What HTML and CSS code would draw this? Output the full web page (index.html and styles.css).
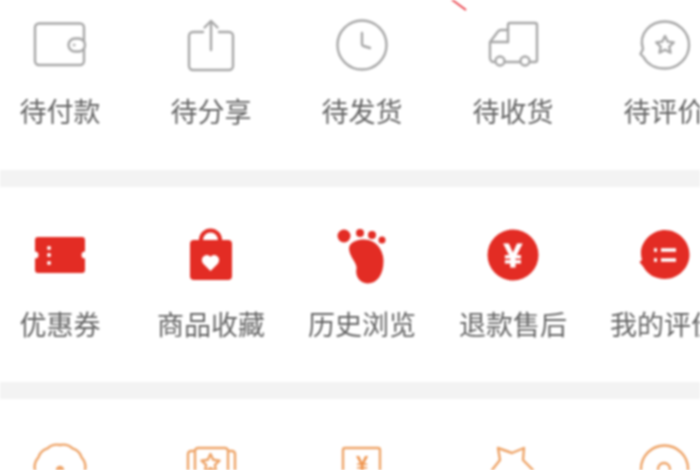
FILE: index.html
```html
<!DOCTYPE html>
<html lang="zh-CN">
<head>
<meta charset="utf-8">
<title>我的订单</title>
<link rel="stylesheet" href="styles.css">
</head>
<body>
<main class="page">
  <svg class="streak" viewBox="0 0 20 12" width="20" height="12" aria-hidden="true"><path d="M1 -1 L16 10"/></svg>

  <section class="row row-orders">
    <div class="cell">
      <svg class="icon line" viewBox="0 0 60 60"><path d="M9 8.500 H50 a4 4 0 0 1 4 4 V46 a4 4 0 0 1 -4 4 H9 a4 4 0 0 1 -4 -4 V12.500 a4 4 0 0 1 4 -4Z"/><rect class="fill-white" x="38.500" y="23.500" width="16.500" height="13" rx="6.500"/><circle class="thin" cx="44" cy="30" r="1"/></svg>
      <span class="label">待付款</span>
    </div>
    <div class="cell">
      <svg class="icon line" viewBox="0 0 60 60"><path d="M22 17 H12 a4 4 0 0 0 -4 4 V51 a4 4 0 0 0 4 4 H48 a4 4 0 0 0 4 -4 V21 a4 4 0 0 0 -4 -4 H38"/><path d="M30 6 V35 M23.500 12.500 L30 6 L36.500 12.500"/></svg>
      <span class="label">待分享</span>
    </div>
    <div class="cell">
      <svg class="icon line" viewBox="0 0 60 60"><circle cx="30" cy="30" r="24.500"/><path d="M30 18 V29 a2 2 0 0 0 1.500 2 L38 33"/></svg>
      <span class="label">待发货</span>
    </div>
    <div class="cell">
      <svg class="icon line" viewBox="0 0 60 60"><path d="M25 27 V10 a2 2 0 0 1 2 -2 H52 a2 2 0 0 1 2 2 V45 a2 2 0 0 1 -2 2 H47"/><path d="M25 15 H18 a4 4 0 0 0 -3 1.500 L7 27 V43 a4 4 0 0 0 4 4 M7 27 H25 M22 47 H37"/><circle cx="17" cy="46" r="4.500"/><circle cx="42" cy="46" r="4.500"/></svg>
      <span class="label">待收货</span>
    </div>
    <div class="cell">
      <svg class="icon line" viewBox="0 0 60 60"><path d="M9 34 C4 18 17 6.500 31 6.500 C44 6.500 55 17 55 30 C55 43 44 53.500 31 53.500 C21 53.500 13 49 9.500 42 L6.500 39 Z"/><path d="M31 21 L33.700 26.600 L39.800 27.400 L35.300 31.600 L36.500 37.700 L31 34.700 L25.500 37.700 L26.700 31.600 L22.200 27.400 L28.300 26.600Z"/></svg>
      <span class="label">待评价</span>
    </div>
  </section>

  <div class="band"></div>

  <section class="row row-services">
    <div class="cell">
      <svg class="icon solid" viewBox="0 0 60 60"><path d="M8 9 H52 a3 3 0 0 1 3 3 V23.500 a3.500 3.500 0 0 0 0 7 V42 a3 3 0 0 1 -3 3 H8 a3 3 0 0 1 -3 -3 V30.500 a3.500 3.500 0 0 0 0 -7 V12 a3 3 0 0 1 3 -3Z"/><circle class="dot" cx="19" cy="20" r="2"/><circle class="dot" cx="19" cy="27" r="2"/><circle class="dot" cx="19" cy="35" r="2"/></svg>
      <span class="label">优惠券</span>
    </div>
    <div class="cell">
      <svg class="icon solid" viewBox="0 0 60 60"><path class="handle" d="M20 14 V12 a9.500 9.500 0 0 1 19 0 V14"/><path d="M13 12 H47 a4 4 0 0 1 4 4 V48 a4 4 0 0 1 -4 4 H13 a4 4 0 0 1 -4 -4 V16 a4 4 0 0 1 4 -4Z"/><path class="dot" d="M29.500 43 L22 35.500 C19 31 22.500 27 26 27 C27.500 27 29 28 29.500 29 C30 28 31.500 27 33 27 C36.500 27 40 31 37 35.500Z"/></svg>
      <span class="label">商品收藏</span>
    </div>
    <div class="cell">
      <svg class="icon solid" viewBox="0 0 60 60"><circle cx="12" cy="8" r="6.500"/><circle cx="28" cy="5" r="4"/><circle cx="40" cy="7" r="4"/><circle cx="50" cy="12" r="3.500"/><path d="M17 21 C17 14 25 11.500 32 11.500 C45 11.500 51.500 23 51.500 33 C51.500 47 45 55.500 35.500 55.500 C27 55.500 23 47 24.500 41 C25.500 35 18 30 17 21Z"/></svg>
      <span class="label">历史浏览</span>
    </div>
    <div class="cell">
      <svg class="icon solid" viewBox="0 0 60 60"><circle cx="30" cy="27" r="25.500"/><text class="yuan" x="30" y="39" text-anchor="middle">¥</text></svg>
      <span class="label">退款售后</span>
    </div>
    <div class="cell">
      <svg class="icon solid" viewBox="0 0 60 60"><path d="M31 2 C44 2 55.500 13 55.500 26.500 C55.500 40 44 51 31 51 C21 51 13 46 9.500 39 L5.500 34 L8 32 C3 16 17 2 31 2Z"/><g class="bars"><path d="M20 22 H23 M20 32 H23 M27 22 H42 M27 32 H42"/></g></svg>
      <span class="label">我的评价</span>
    </div>
  </section>

  <div class="band"></div>

  <section class="row row-perks">
    <div class="cell">
      <svg class="icon accent" viewBox="0 0 60 60"><path d="M30 4 A14 14 0 0 1 42.500 7.350 A14 14 0 0 1 51.650 16.500 A14 14 0 0 1 55 29 A14 14 0 0 1 51.650 41.500 A14 14 0 0 1 42.500 50.650 A14 14 0 0 1 30 54 A14 14 0 0 1 17.500 50.650 A14 14 0 0 1 8.350 41.500 A14 14 0 0 1 5 29 A14 14 0 0 1 8.350 16.500 A14 14 0 0 1 17.500 7.350 A14 14 0 0 1 30 4Z"/><circle class="accent-dot" cx="30" cy="29" r="3"/></svg>
    </div>
    <div class="cell">
      <svg class="icon accent" viewBox="0 0 60 60"><rect x="14" y="7" width="33" height="42" rx="3"/><path d="M14 10 H10 a3 3 0 0 0 -3 3 V45 M47 10 H51 a3 3 0 0 1 3 3 V45"/><path d="M29.500 13 L32.200 18.800 L38.500 19.600 L33.900 23.900 L35.100 30.200 L29.500 27.100 L23.900 30.200 L25.100 23.900 L20.500 19.600 L26.800 18.800Z"/></svg>
    </div>
    <div class="cell">
      <svg class="icon accent" viewBox="0 0 60 60"><rect x="11" y="7" width="37" height="44" rx="2"/><text class="yuan yuan-accent" x="30" y="30" text-anchor="middle">¥</text></svg>
    </div>
    <div class="cell">
      <svg class="icon accent" viewBox="0 0 60 60"><path d="M15 7 L29 12 L41 7 L40 19 L50 29 L42 55 H18 L9 29 L17 19Z"/></svg>
    </div>
    <div class="cell">
      <svg class="icon accent" viewBox="0 0 60 60"><circle cx="30.500" cy="28" r="23.500"/><circle cx="30" cy="28" r="6"/></svg>
    </div>
  </section>
</main>
</body>
</html>
```

FILE: styles.css
```css
html, body {
  margin: 0;
  padding: 0;
  background: #fff;
}

.page {
  position: relative;
  width: 700px;
  height: 470px;
  overflow: hidden;
  background: #fff;
  filter: blur(1px);
  font-family: "Noto Sans CJK SC", "Noto Sans", sans-serif;
}

.streak {
  position: absolute;
  left: 450px;
  top: 0;
  fill: none;
  stroke: #e8323c;
  stroke-width: 1.6;
}

.row {
  display: flex;
  margin-left: -15.5px;
}

.row-orders {
  padding: 15px 0 41px;
}

.row-services {
  padding: 41px 0 40px;
}

.row-perks {
  padding-top: 42px;
}

.band {
  height: 17px;
  background: #f3f3f3;
}

.cell {
  flex: none;
  width: 151px;
  display: flex;
  flex-direction: column;
  align-items: center;
  gap: 18px;
}

.label {
  font-size: 27px;
  line-height: 36px;
  color: #666;
  white-space: nowrap;
}

.icon {
  display: block;
  flex: none;
  width: 60px;
  height: 60px;
  overflow: visible;
}

.line {
  fill: none;
  stroke: #a8a8a8;
  stroke-width: 2.4;
  stroke-linejoin: round;
  stroke-linecap: round;
}

.fill-white {
  fill: #fff;
}

.thin {
  stroke-width: 1;
}

.solid {
  fill: #e32c24;
}

.solid .dot {
  fill: #fff;
}

.solid .handle {
  fill: none;
  stroke: #e32c24;
  stroke-width: 4;
}

.bars path {
  fill: none;
  stroke: #fff;
  stroke-width: 3.5;
}

.yuan {
  font-family: "Liberation Sans", sans-serif;
  font-size: 33px;
  font-weight: 700;
  fill: #fff;
  stroke: #fff;
  stroke-width: 0.8;
}

.accent {
  fill: none;
  stroke: #eea468;
  stroke-width: 2.4;
  stroke-linejoin: round;
}

.accent .accent-dot {
  fill: #eea468;
}

.accent .yuan-accent {
  font-size: 22px;
  fill: #ef9650;
  stroke: none;
}
```
